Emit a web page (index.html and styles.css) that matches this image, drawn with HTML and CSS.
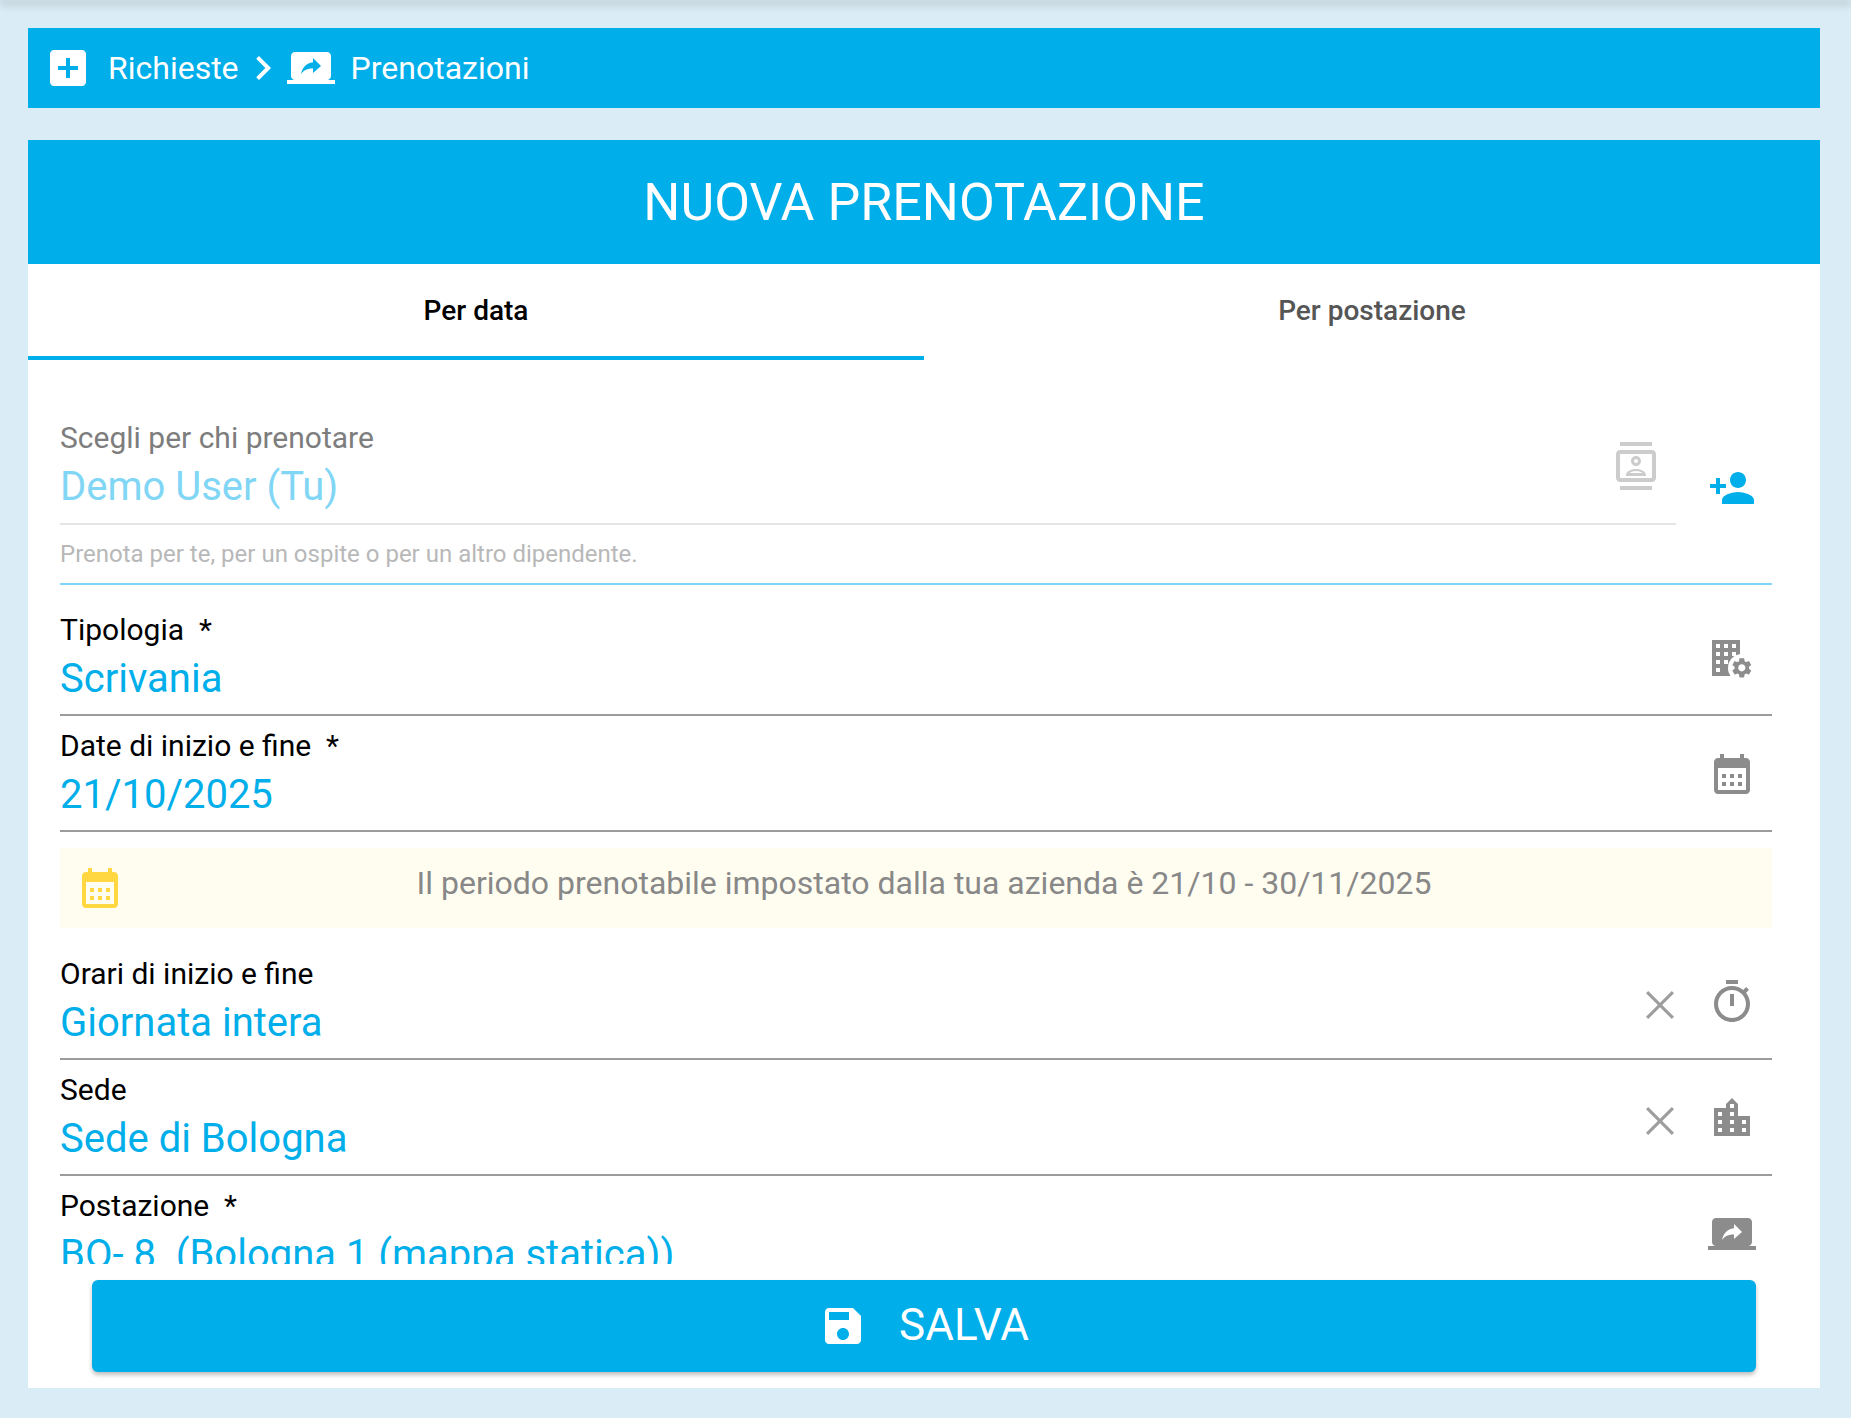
FILE: index.html
```html
<!DOCTYPE html>
<html lang="it">
<head>
<meta charset="utf-8">
<title>Nuova prenotazione</title>
<link rel="stylesheet" href="styles.css">
</head>
<body>
<div class="appbar-shadow"></div>
<main class="page">
  <nav class="crumbs">
    <svg class="icon" viewBox="0 0 24 24"><path d="M19 3H5c-1.1 0-2 .9-2 2v14c0 1.1.9 2 2 2h14c1.1 0 2-.9 2-2V5c0-1.1-.9-2-2-2zm-2 10h-4v4h-2v-4H7v-2h4V7h2v4h4v2z"/></svg>
    <span class="crumb-text">Richieste</span>
    <svg class="icon" viewBox="0 0 24 24"><path d="M10 6L8.59 7.41 13.17 12l-4.58 4.59L10 18l6-6z"/></svg>
    <svg class="icon" viewBox="0 0 24 24"><path d="M20 18c1.1 0 1.99-.9 1.99-2L22 6c0-1.11-.9-2-2-2H4c-1.11 0-2 .89-2 2v10c0 1.1.89 2 2 2H0v2h24v-2h-4zm-7-3.53v-2.19c-2.78 0-4.61.85-6 2.72.56-2.67 2.11-5.33 6-5.9V7l4 3.99-4 3.48z"/></svg>
    <span class="crumb-text">Prenotazioni</span>
  </nav>
  <section class="card">
    <h1 class="card-title">NUOVA PRENOTAZIONE</h1>
    <div class="tabs">
      <div class="tab tab-active">Per data</div>
      <div class="tab">Per postazione</div>
    </div>
    <div class="form">
      <div class="chooser">
        <div class="chooser-main">
          <div class="chooser-input">
            <div class="field-text">
              <div class="label label-muted">Scegli per chi prenotare</div>
              <div class="value value-faded">Demo User (Tu)</div>
            </div>
            <svg class="icon icon-light" viewBox="0 0 24 24"><path d="M20 0H4v2h16V0zM4 24h16v-2H4v2zM20 4H4c-1.1 0-2 .9-2 2v12c0 1.1.9 2 2 2h16c1.1 0 2-.9 2-2V6c0-1.1-.9-2-2-2zm0 14H4V6h16v12zm-8-6c1.38 0 2.5-1.12 2.5-2.5S13.38 7 12 7 9.5 8.12 9.5 9.5 10.62 12 12 12zm0-3.5c.55 0 1 .45 1 1s-.45 1-1 1-1-.45-1-1 .45-1 1-1zM17 16.49C17 14.4 13.69 13.5 12 13.5s-5 .9-5 2.99V17h10v-.51zm-8.19-.99c.61-.52 2.03-1 3.19-1 1.17 0 2.59.48 3.2 1H8.81z"/></svg>
          </div>
          <div class="hint">Prenota per te, per un ospite o per un altro dipendente.</div>
        </div>
        <svg class="icon icon-blue icon-add" viewBox="0 0 24 24"><path d="M15 12c2.21 0 4-1.79 4-4s-1.79-4-4-4-4 1.79-4 4 1.79 4 4 4zm-9-2V7H4v3H1v2h3v3h2v-3h3v-2H6zm9 4c-2.67 0-8 1.34-8 4v2h16v-2c0-2.66-5.33-4-8-4z"/></svg>
      </div>

      <div class="field field-first">
        <div class="field-text">
          <div class="label">Tipologia&nbsp; *</div>
          <div class="value">Scrivania</div>
        </div>
        <svg class="icon icon-gray" viewBox="0 0 24 24"><path fill-rule="evenodd" d="M2 3h14v18H2zM4 5v2h2V5zM8 5v2h2V5zM12 5v2h2V5zM4 9v2h2V9zM8 9v2h2V9zM12 9v2h2V9zM4 13v2h2v-2zM8 13v2h2v-2zM12 13v2h2v-2zM4 17v2h2v-2z"/><circle class="gear-gap" cx="17" cy="17" r="7"/><path transform="translate(10.9 10.9) scale(.5)" d="M19.14 12.94c.04-.3.06-.61.06-.94 0-.32-.02-.64-.07-.94l2.03-1.58c.18-.14.23-.41.12-.61l-1.92-3.32c-.12-.22-.37-.29-.59-.22l-2.39.96c-.5-.38-1.03-.7-1.62-.94l-.36-2.54c-.04-.24-.24-.41-.48-.41h-3.84c-.24 0-.43.17-.47.41l-.36 2.54c-.59.24-1.13.57-1.62.94l-2.39-.96c-.22-.08-.47 0-.59.22L2.74 8.87c-.12.21-.08.47.12.61l2.03 1.58c-.05.3-.09.63-.09.94s.02.64.07.94l-2.03 1.58c-.18.14-.23.41-.12.61l1.92 3.32c.12.22.37.29.59.22l2.39-.96c.5.38 1.03.7 1.62.94l.36 2.54c.05.24.24.41.48.41h3.84c.24 0 .44-.17.47-.41l.36-2.54c.59-.24 1.13-.56 1.62-.94l2.39.96c.22.08.47 0 .59-.22l1.92-3.32c.12-.22.07-.47-.12-.61l-2.01-1.58zM12 15.6c-1.98 0-3.6-1.62-3.6-3.6s1.62-3.6 3.6-3.6 3.6 1.62 3.6 3.6-1.62 3.6-3.6 3.6z"/></svg>
      </div>

      <div class="field">
        <div class="field-text">
          <div class="label">Date di inizio e fine&nbsp; *</div>
          <div class="value">21/10/2025</div>
        </div>
        <svg class="icon icon-gray" viewBox="0 0 24 24"><path d="M19 4h-1V2h-2v2H8V2H6v2H5c-1.11 0-2 .9-2 2v14c0 1.1.89 2 2 2h14c1.1 0 2-.9 2-2V6c0-1.1-.9-2-2-2zm0 16H5V9h14v11zM7 12h2v2H7zm4 0h2v2h-2zm4 0h2v2h-2zM7 16h2v2H7zm4 0h2v2h-2zm4 0h2v2h-2z"/></svg>
      </div>

      <div class="note">
        <svg class="icon icon-yellow" viewBox="0 0 24 24"><path d="M19 4h-1V2h-2v2H8V2H6v2H5c-1.11 0-2 .9-2 2v14c0 1.1.89 2 2 2h14c1.1 0 2-.9 2-2V6c0-1.1-.9-2-2-2zm0 16H5V9h14v11zM7 12h2v2H7zm4 0h2v2h-2zm4 0h2v2h-2zM7 16h2v2H7zm4 0h2v2h-2zm4 0h2v2h-2z"/></svg>
        <div class="note-text">Il periodo prenotabile impostato dalla tua azienda è 21/10 - 30/11/2025</div>
      </div>

      <div class="field">
        <div class="field-text">
          <div class="label">Orari di inizio e fine</div>
          <div class="value">Giornata intera</div>
        </div>
        <svg class="icon icon-clear" viewBox="0 0 24 24"><path d="M19 6.1L17.9 5 12 10.9 6.1 5 5 6.1 10.9 12 5 17.9 6.1 19 12 13.1 17.9 19 19 17.9 13.1 12z"/></svg>
        <svg class="icon icon-gray" viewBox="0 0 24 24"><path d="M15 1H9v2h6V1zm-4 13h2V8h-2v6zm8.03-6.61l1.42-1.42c-.43-.51-.9-.99-1.41-1.41l-1.42 1.42C16.07 4.74 14.12 4 12 4c-4.97 0-9 4.03-9 9s4.02 9 9 9 9-4.03 9-9c0-2.12-.74-4.07-1.97-5.61zM12 20c-3.87 0-7-3.13-7-7s3.13-7 7-7 7 3.13 7 7-3.13 7-7 7z"/></svg>
      </div>

      <div class="field">
        <div class="field-text">
          <div class="label">Sede</div>
          <div class="value">Sede di Bologna</div>
        </div>
        <svg class="icon icon-clear" viewBox="0 0 24 24"><path d="M19 6.1L17.9 5 12 10.9 6.1 5 5 6.1 10.9 12 5 17.9 6.1 19 12 13.1 17.9 19 19 17.9 13.1 12z"/></svg>
        <svg class="icon icon-gray" viewBox="0 0 24 24"><path d="M15 11V5l-3-3-3 3v2H3v14h18V11h-6zm-8 8H5v-2h2v2zm0-4H5v-2h2v2zm0-4H5V9h2v2zm6 8h-2v-2h2v2zm0-4h-2v-2h2v2zm0-4h-2V9h2v2zm0-4h-2V5h2v2zm6 12h-2v-2h2v2zm0-4h-2v-2h2v2z"/></svg>
      </div>

      <div class="field">
        <div class="field-text">
          <div class="label">Postazione&nbsp; *</div>
          <div class="value">BO- 8&nbsp; (Bologna 1 (mappa statica))</div>
        </div>
        <svg class="icon icon-gray" viewBox="0 0 24 24"><path d="M20 18c1.1 0 1.99-.9 1.99-2L22 6c0-1.11-.9-2-2-2H4c-1.11 0-2 .89-2 2v10c0 1.1.89 2 2 2H0v2h24v-2h-4zm-7-3.53v-2.19c-2.78 0-4.61.85-6 2.72.56-2.67 2.11-5.33 6-5.9V7l4 3.99-4 3.48z"/></svg>
      </div>
    </div>
    <div class="actions">
      <button class="save" type="button">
        <svg class="icon" viewBox="0 0 24 24"><path d="M17 3H5c-1.11 0-2 .9-2 2v14c0 1.1.89 2 2 2h14c1.1 0 2-.9 2-2V7l-4-4zm-5 16c-1.66 0-3-1.34-3-3s1.34-3 3-3 3 1.34 3 3-1.34 3-3 3zm3-10H5V5h10v4z"/></svg>
        <span class="save-text">SALVA</span>
      </button>
    </div>
  </section>
</main>
</body>
</html>
```

FILE: styles.css
```css
* { box-sizing: border-box; }

html, body {
  margin: 0;
  height: 100%;
  overflow: hidden;
}

body {
  background: #daecf6;
  font-family: Roboto, "Liberation Sans", sans-serif;
  color: #000;
}

.appbar-shadow {
  height: 0;
  box-shadow: 0 2px 9px 1px rgba(0, 0, 0, .42);
}

.page {
  padding: 28px 31px 30px 28px;
  height: 1418px;
  display: flex;
  flex-direction: column;
  gap: 32px;
}

.icon {
  width: 48px;
  height: 48px;
  flex: none;
  fill: currentColor;
  display: block;
}

.crumbs {
  height: 80px;
  flex: none;
  background: #00aeea;
  color: #fff;
  display: flex;
  align-items: center;
  padding-left: 16px;
}

.crumb-text {
  font-size: 32px;
  margin-left: 16px;
}

.card {
  flex: 1;
  min-height: 0;
  background: #fff;
  display: flex;
  flex-direction: column;
}

.card-title {
  margin: 0;
  height: 124px;
  flex: none;
  background: #00aeea;
  color: #fff;
  font-size: 52px;
  font-weight: 400;
  line-height: 126px;
  text-align: center;
}

.tabs {
  height: 96px;
  flex: none;
  display: flex;
}

.tab {
  flex: 1;
  font-size: 28px;
  font-weight: 500;
  color: #555;
  text-align: center;
  padding-top: 27px;
  line-height: 40px;
}

.tab-active {
  color: #000;
  border-bottom: 4px solid #00aeea;
}

.form {
  flex: 1;
  min-height: 0;
  overflow: hidden;
  padding: 0 48px 0 32px;
}

.chooser {
  margin-top: 48px;
  height: 177px;
  display: flex;
  border-bottom: 2px solid #80d6f4;
}

.chooser-main {
  flex: 1;
  min-width: 0;
}

.chooser-input {
  height: 117px;
  display: flex;
  align-items: flex-start;
  border-bottom: 2px solid #e5e5e5;
  padding-right: 16px;
}

.chooser-input .icon {
  margin-top: 34px;
}

.hint {
  font-size: 24px;
  line-height: 34px;
  margin-top: 12px;
  color: #b8b8b8;
}

.icon-add {
  margin: 56px 16px 0 32px;
}

.field {
  height: 116px;
  display: flex;
  align-items: center;
  border-bottom: 2px solid #9b9b9b;
  padding-right: 16px;
}

.field .icon {
  margin-top: 2px;
}

.field .icon-clear {
  margin-top: 8px;
  margin-right: 24px;
  color: #9e9e9e;
}

.field-first {
  margin-top: 15px;
}

.field-text {
  flex: 1;
  min-width: 0;
  align-self: flex-start;
}

.label {
  font-size: 30px;
  line-height: 40px;
  margin-top: 10px;
}

.label-muted {
  color: #7d7d7d;
}

.value {
  font-size: 40px;
  line-height: 52px;
  margin-top: 3px;
  color: #00aeea;
  white-space: nowrap;
}

.value-faded {
  color: #80d6f4;
}

.icon-gray { color: #8c8c8c; }
.icon-light { color: #cccccc; }
.icon-blue { color: #00aeea; }
.icon-yellow { color: #ffd740; }
.gear-gap { fill: #fff; }

.note {
  margin: 16px 0;
  height: 80px;
  background: #fffdf0;
  display: flex;
  align-items: center;
  padding: 0 48px 0 16px;
}

.note-text {
  flex: 1;
  text-align: center;
  font-size: 32px;
  color: #888;
  padding-bottom: 10px;
}

.actions {
  flex: none;
  height: 124px;
  padding: 16px 64px 16px;
}

.save {
  width: 100%;
  height: 92px;
  border: 0;
  border-radius: 6px;
  background: #00aeea;
  color: #fff;
  font-family: inherit;
  font-size: 44px;
  box-shadow: 0 3px 4px rgba(0, 0, 0, .25);
  display: flex;
  align-items: center;
  justify-content: center;
  gap: 32px;
}

.save-text {
  padding-bottom: 2px;
}
```
